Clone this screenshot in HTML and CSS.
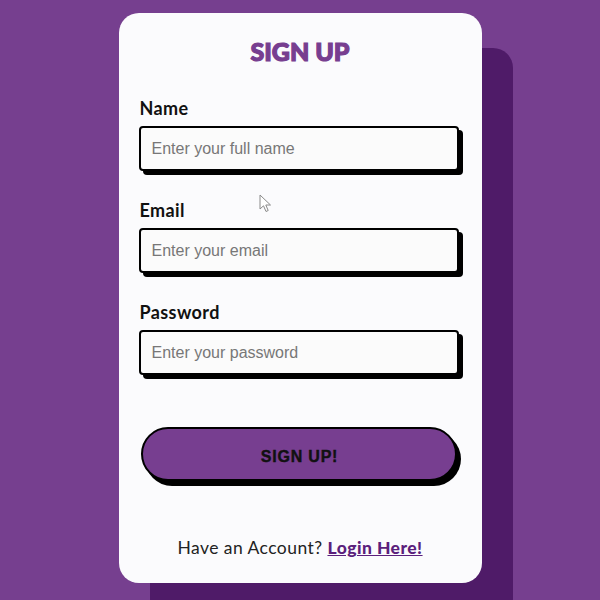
FILE: index.html
```html
<!DOCTYPE html>
<html lang="en">
<head>
    <meta charset="UTF-8">
    <meta name="viewport" content="width=device-width, initial-scale=1.0">
    <title>Sign Up</title>
    <link rel="stylesheet" href="styles.css">
</head>
<body>
    <div class="card">
        <h1 class="title">SIGN UP</h1>
        <form class="form">
            <label class="label" for="name">Name</label>
            <input class="input" id="name" type="text" placeholder="Enter your full name">

            <label class="label" for="email">Email</label>
            <input class="input" id="email" type="email" placeholder="Enter your email">

            <label class="label" for="password">Password</label>
            <input class="input" id="password" type="password" placeholder="Enter your password">

            <button class="submit" type="button">SIGN UP!</button>
        </form>
        <p class="footer">Have an Account? <a href="#" class="login">Login Here!</a></p>
    </div>

    <!-- mouse pointer caught in the capture -->
    <svg class="cursor" width="14" height="20" viewBox="0 0 14 20">
        <path d="M1 1 L1 15 L4.5 11.8 L7 17.5 L9.2 16.5 L6.8 11 L11.5 11 Z" fill="#fff" stroke="#8a8a8a" stroke-width="1" stroke-linejoin="round"/>
    </svg>
</body>
</html>
```

FILE: styles.css
```css
body {
    margin: 0;
    background-color: #763f8f;
    font-family: 'Poppins', 'Lato', 'Open Sans', sans-serif;
    height: 600px;
    overflow: hidden;
}

.card {
    width: 321px;
    height: 547px;
    margin: 13px auto 0;
    padding: 23px 21px 0;
    background-color: #fbfbfd;
    border-radius: 20px;
    box-shadow: 31px 35px 0 #4f1b68;
}

.title {
    margin: 0;
    text-align: center;
    font-family: 'Lato', sans-serif;
    font-weight: 900;
    font-size: 25px;
    line-height: 30px;
    color: #773e90;
    letter-spacing: 0;
    -webkit-text-stroke: 1.2px #773e90;
}

.form {
    display: flex;
    flex-direction: column;
    margin-top: 30px;
}

.label {
    font-family: 'Lato', sans-serif;
    font-weight: 700;
    font-size: 18px;
    line-height: 24px;
    letter-spacing: 0.4px;
    color: #111;
    margin-bottom: 6px;
}

.input {
    box-sizing: border-box;
    width: 320px;
    height: 45px;
    margin: 0 0 27px -1px;
    padding: 0 11px;
    border: 2px solid #000;
    border-radius: 4px;
    box-shadow: 4px 4px 0 #000;
    background-color: #fbfbfb;
    font-family: 'Liberation Sans', Arial, sans-serif;
    font-size: 16px;
    color: #222;
    outline: none;
}

.input::placeholder {
    color: #777;
}

.submit {
    box-sizing: border-box;
    width: 316px;
    height: 54px;
    margin: 25px 0 0 1px;
    border: 2px solid #000;
    border-radius: 27px;
    box-shadow: 4px 5px 0 #000;
    background-color: #773e90;
    font-family: 'Liberation Sans', Arial, sans-serif;
    font-weight: 700;
    font-size: 16px;
    letter-spacing: 0.8px;
    color: #111;
    -webkit-text-stroke: 0.4px #111;
    padding: 6px 0 0 2px;
    cursor: pointer;
}

.footer {
    margin: 56px 0 0;
    text-align: center;
    font-family: 'Lato', sans-serif;
    font-size: 17.5px;
    letter-spacing: 0.45px;
    color: #222;
}

.login {
    color: #5b1f7c;
    font-weight: 900;
}

.cursor {
    position: absolute;
    left: 259px;
    top: 194px;
}
```
